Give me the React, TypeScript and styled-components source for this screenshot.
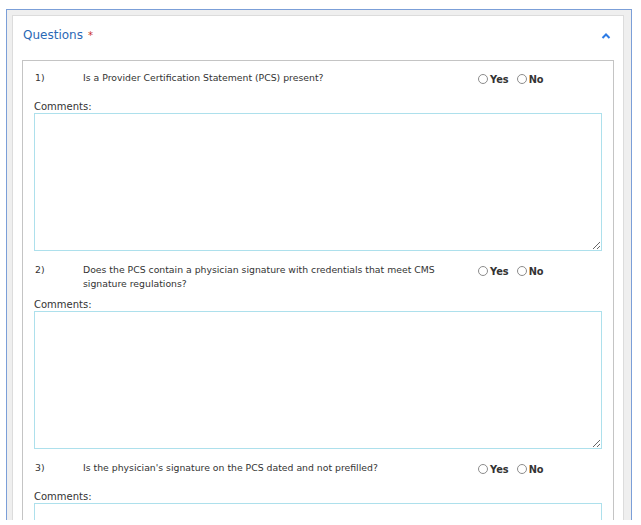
import React from "react";
import styled, { createGlobalStyle } from "styled-components";

const GlobalStyle = createGlobalStyle`
    html, body {
        margin: 0;
        padding: 0;
        background: #ffffff;
    }
    body {
        font-family: "DejaVu Sans", Verdana, sans-serif;
        color: #333333;
    }
`;

const Frame = styled.div`
    margin: 9px 0 0 6px;
    width: 626px;
    height: 511px;
    box-sizing: border-box;
    border: 1px solid #7b9fd8;
    border-bottom: none;
    background: #efefef;
    padding: 5px 7px 0 5px;
    overflow: hidden;
`;

const Panel = styled.section`
    background: #ffffff;
    border: 1px solid #dcdcdc;
    border-bottom: none;
    height: 100%;
    box-sizing: border-box;
`;

const Header = styled.div`
    display: flex;
    align-items: flex-start;
    justify-content: space-between;
    height: 44px;
    box-sizing: border-box;
    padding: 11px 12px 0 10px;
`;

const Title = styled.h2`
    margin: 0;
    font-size: 12px;
    line-height: 16px;
    font-weight: normal;
    color: #2b69b5;
`;

const Required = styled.span`
    color: #c9302c;
    font-size: 10px;
    margin-left: 5px;
    vertical-align: 0;
`;

const Toggle = styled.button`
    border: none;
    background: none;
    padding: 0;
    margin-top: 6px;
    width: 10px;
    height: 6px;
    display: flex;
    cursor: pointer;
`;

const Box = styled.div`
    margin: 0 9px;
    border: 1px solid #c4c4c4;
    border-bottom: none;
    padding: 10px 11px 0 11px;
    height: 460px;
    box-sizing: border-box;
`;

const Question = styled.div`
    & + & {
        margin-top: 12px;
    }
`;

const QuestionRow = styled.div`
    display: flex;
    align-items: flex-start;
    min-height: 22px;
    font-size: 9.3px;
    line-height: 14px;
`;

const Number = styled.span`
    flex: 0 0 48px;
    padding-left: 1px;
`;

const Text = styled.span`
    flex: 1;
    padding-right: 22px;
`;

const Choices = styled.div`
    flex: 0 0 124px;
    display: flex;
    align-items: center;
    padding-top: 2px;
`;

const Choice = styled.label`
    display: flex;
    align-items: center;
    font-weight: bold;
    font-size: 9.8px;
    color: #333333;
    & + & {
        margin-left: 8px;
    }
`;

const Radio = styled.input.attrs({ type: "radio" })`
    appearance: none;
    margin: 0 2px 0 0;
    width: 10px;
    height: 10px;
    box-sizing: border-box;
    border: 1px solid #8c8c8c;
    border-radius: 50%;
    background: #ffffff;
    position: relative;
    top: -1px;
`;

const CommentLabel = styled.label`
    display: block;
    margin-top: 7px;
    font-size: 10px;
    line-height: 13px;
    color: #333333;
`;

const Comment = styled.textarea`
    display: block;
    margin-top: 0;
    width: 100%;
    height: 138px;
    box-sizing: border-box;
    border: 1px solid #ade0ec;
    resize: vertical;
    font-family: inherit;
    font-size: 10px;
    outline: none;
`;

const questions = [
    "Is a Provider Certification Statement (PCS) present?",
    "Does the PCS contain a physician signature with credentials that meet CMS signature regulations?",
    "Is the physician's signature on the PCS dated and not prefilled?",
];

export default function App() {
    return (
        <>
            <GlobalStyle />
            <Frame>
                <Panel>
                    <Header>
                        <Title>
                            Questions<Required>*</Required>
                        </Title>
                        <Toggle aria-label="Collapse">
                            <svg width="10" height="6" viewBox="0 0 10 6">
                                <polyline
                                    points="1.5,5 5,1.5 8.5,5"
                                    fill="none"
                                    stroke="#2d7be5"
                                    strokeWidth="2"
                                />
                            </svg>
                        </Toggle>
                    </Header>
                    <Box>
                        {questions.map((q, i) => (
                            <Question key={i}>
                                <QuestionRow>
                                    <Number>{i + 1})</Number>
                                    <Text>{q}</Text>
                                    <Choices>
                                        <Choice>
                                            <Radio name={`q${i}`} />
                                            Yes
                                        </Choice>
                                        <Choice>
                                            <Radio name={`q${i}`} />
                                            No
                                        </Choice>
                                    </Choices>
                                </QuestionRow>
                                <CommentLabel>Comments:</CommentLabel>
                                <Comment />
                            </Question>
                        ))}
                    </Box>
                </Panel>
            </Frame>
        </>
    );
}
